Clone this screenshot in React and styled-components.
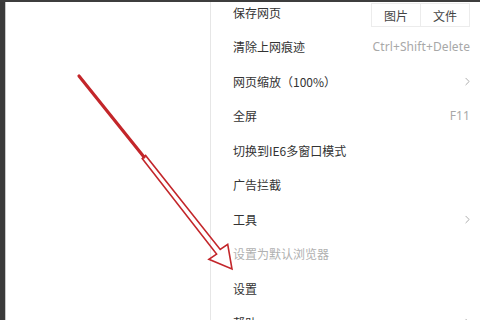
import React from "react";
import styled, { createGlobalStyle } from "styled-components";
import { ChevronRight } from "lucide-react";

const Global = createGlobalStyle`
  html, body {
    margin: 0;
    padding: 0;
    background: #fff;
  }
  body {
    font-family: "Noto Sans CJK SC", "Liberation Sans", sans-serif;
  }
`;

const Screen = styled.div`
  position: relative;
  width: 480px;
  height: 320px;
  overflow: hidden;
  display: flex;
  flex-direction: column;
  background: #fff;
`;

const TopBar = styled.div`
  flex: 0 0 2px;
  background: #3d3d3d;
  position: relative;
  z-index: 1;
`;

const Body = styled.div`
  flex: 1;
  display: flex;
  min-height: 0;
`;

const SideStrip = styled.div`
  flex: 0 0 6px;
  background: linear-gradient(to right, #3a3a3a 0 5px, #c8c8c8 5px 6px);
`;

const Page = styled.div`
  flex: 1;
  background: #fff;
`;

const Menu = styled.div`
  width: 269px;
  flex-shrink: 0;
  border-left: 1px solid #e6e6e6;
  background: #fff;
  display: flex;
  flex-direction: column;
  margin-top: -7px;
`;

const Row = styled.div`
  height: 34.5px;
  flex-shrink: 0;
  display: flex;
  align-items: center;
  justify-content: space-between;
  padding: 0 10px 0 22px;
  font-size: 12px;
  color: ${(p) => (p.$disabled ? "#b0b0b0" : "#333")};
`;

const Hint = styled.span`
  font-size: 12px;
  color: #a8a8a8;
  font-family: "Noto Sans", "Liberation Sans", sans-serif;
  letter-spacing: 0.1px;
`;

const More = styled(ChevronRight)`
  margin-right: -4px;
`;

const ButtonGroup = styled.div`
  display: flex;
  border: 1px solid #ececec;
  height: 22px;
  margin-top: 6px;
`;

const GroupButton = styled.div`
  width: 48px;
  display: flex;
  align-items: center;
  justify-content: center;
  font-size: 12px;
  color: #444;
  & + & {
    border-left: 1px solid #ececec;
  }
`;

const Arrow = styled.svg`
  position: absolute;
  left: 0;
  top: 0;
  pointer-events: none;
`;

const items = [
  { label: "清除上网痕迹", hint: "Ctrl+Shift+Delete" },
  { label: "网页缩放（100%）", more: true },
  { label: "全屏", hint: "F11" },
  { label: "切换到IE6多窗口模式" },
  { label: "广告拦截" },
  { label: "工具", more: true },
  { label: "设置为默认浏览器", disabled: true },
  { label: "设置" },
  { label: "帮助", more: true },
];

export default function App() {
  return (
    <>
      <Global />
      <Screen>
        <TopBar />
        <Body>
          <SideStrip />
          <Page />
          <Menu>
            <Row>
              <span>保存网页</span>
              <ButtonGroup>
                <GroupButton>图片</GroupButton>
                <GroupButton>文件</GroupButton>
              </ButtonGroup>
            </Row>
            {items.map((it) => (
              <Row key={it.label} $disabled={it.disabled}>
                <span>{it.label}</span>
                {it.hint && <Hint>{it.hint}</Hint>}
                {it.more && <More size={13} color="#9a9a9a" strokeWidth={1.5} />}
              </Row>
            ))}
          </Menu>
        </Body>
        <Arrow width="480" height="320" viewBox="0 0 480 320">
          <defs>
            <filter id="glow" x="-20%" y="-20%" width="140%" height="140%">
              <feGaussianBlur stdDeviation="0.6" />
            </filter>
          </defs>
          <g filter="url(#glow)" stroke="#c3262b" fill="none" strokeLinejoin="miter">
            <line x1="79" y1="76" x2="144" y2="157" strokeWidth="3.2" strokeLinecap="round" />
            <polygon
              points="142.2,158.6 216.6,254.1 208.9,259.3 232,269 227.7,244.3 220.2,249.4 145.6,155.4"
              strokeWidth="1.6"
            />
          </g>
        </Arrow>
      </Screen>
    </>
  );
}
